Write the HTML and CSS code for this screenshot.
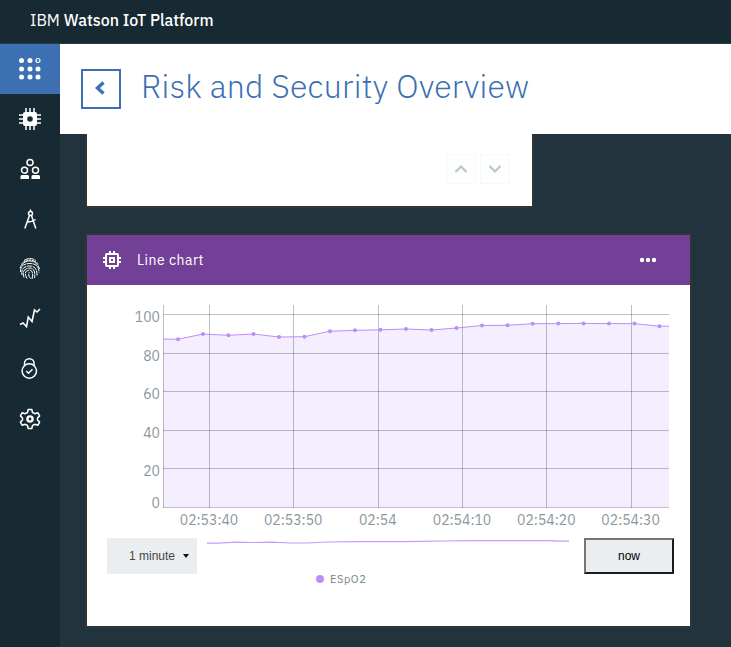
FILE: index.html
```html
<!DOCTYPE html>
<html lang="en">
<head>
<meta charset="utf-8">
<title>IBM Watson IoT Platform</title>
<link rel="stylesheet" href="styles.css">
</head>
<body>
<header class="topbar"><span class="brand-ibm">IBM</span><span class="brand">Watson IoT Platform</span></header>
<div class="shell">
  <nav class="sidebar">
    <a class="nav-item active"><svg width="24" height="24" viewBox="0 0 24 24" fill="#fff"><circle cx="3.5" cy="3.5" r="2.5"/><circle cx="12" cy="3.5" r="2.5"/><circle cx="20" cy="3.5" r="2" fill="none" stroke="#fff" stroke-width="1.2"/><circle cx="3.5" cy="12" r="2.5"/><circle cx="12" cy="12" r="2.5"/><circle cx="20" cy="12" r="2.5"/><circle cx="3.5" cy="20" r="2.5"/><circle cx="12" cy="20" r="2.5"/><circle cx="20" cy="20" r="2.5"/></svg></a>
    <a class="nav-item"><svg width="24" height="24" viewBox="0 0 24 24"><path d="M8 1v22M12 1v22M16 1v22M1 8h22M1 12h22M1 16h22" stroke="#fff" stroke-width="1.500"/><rect x="5" y="5" width="14" height="14" rx="2" fill="#fff"/><circle cx="12" cy="12" r="2.800" fill="#172932"/></svg></a>
    <a class="nav-item"><svg width="24" height="24" viewBox="0 0 24 24" fill="none" stroke="#fff" stroke-width="1.500"><circle cx="12" cy="5.500" r="3"/><circle cx="6.500" cy="13.200" r="3"/><circle cx="17.500" cy="13.200" r="3"/><path d="M2.500 22v-3l1-1h6.500l1 1v3zM13.500 22v-3l1-1H21l1 1v3z" fill="#fff" stroke="none"/></svg></a>
    <a class="nav-item"><svg width="24" height="24" viewBox="0 0 24 24" fill="none" stroke="#fff" stroke-width="1.500"><path d="M12.500 2.500v2M11.500 8.500l-4.700 13M13.500 8.500l4.300 13M8.500 15q5 .5 9-2.500"/><circle cx="12.500" cy="6.500" r="2"/></svg></a>
    <a class="nav-item"><svg width="24" height="24" viewBox="0 0 24 24" fill="none" stroke="#fff" stroke-width="1"><g stroke-dasharray="5 .7"><path d="M6 3.500q6-4 12 0M3.500 7q8-8 17 0M2 11Q5 4 12 4t9.500 8M2.500 15Q2 6.500 12 6.500q9 0 9 9M4 18q-1.500-9 8-9 7.500 0 7 10M6 20.500q-3-9 6-9.500 6 .5 4.500 10M9 21.500q-4.500-8 3-8.500 4 1 2 9M12.500 21.500q-3-3-1-6.500"/></g></svg></a>
    <a class="nav-item"><svg width="24" height="24" viewBox="0 0 24 24" fill="none" stroke="#fff" stroke-width="1.600"><path d="M2 17.500l3-1.500 3.500 3.500 1.800-9.500 3.700 4.500L16.500 3l2.500 2 3-3"/></svg></a>
    <a class="nav-item"><svg width="24" height="24" viewBox="0 0 24 24" fill="none" stroke="#fff" stroke-width="1.500"><circle cx="11.300" cy="14" r="7.200"/><path d="M6.500 8.500V6.500a4.800 4.800 0 0 1 9.600 0v2M8.200 14l2.300 2.300 4-4"/></svg></a>
    <a class="nav-item"><svg width="24" height="24" viewBox="0 0 24 24" fill="none" stroke="#fff" stroke-width="1.500" stroke-linejoin="round"><path d="M10.200 2.500h3.600l.7 3 2.300 1.200 3-1 1.800 3.200L19.500 11v2l2.100 2.100-1.800 3.200-3-1-2.300 1.200-.7 3h-3.600l-.7-3-2.300-1.200-3 1-1.800-3.200L4.500 13v-2L2.400 8.900l1.800-3.200 3 1 2.300-1.200z"/><circle cx="12" cy="12" r="2.600" stroke-width="2.400"/></svg></a>
  </nav>
  <div class="page">
    <div class="titlebar">
      <a class="back"><svg width="14" height="16" viewBox="0 0 14 16"><path d="M9.500 1.500L3.500 7l6 5.500" fill="none" stroke="#3d70b2" stroke-width="3.400"/></svg></a>
      <h1>Risk and Security Overview</h1>
    </div>
    <main>
      <section class="card pager">
        <span class="step"><svg width="14" height="10" viewBox="0 0 14 10"><path d="M1.500 8L7 2.500 12.500 8"/></svg></span>
        <span class="step"><svg width="14" height="10" viewBox="0 0 14 10"><path d="M1.500 2L7 7.500 12.500 2"/></svg></span>
      </section>
      <section class="card chart-card">
        <div class="card-head">
          <svg width="18" height="18" viewBox="0 0 18 18" fill="none" stroke="#fff" stroke-width="2"><rect x="3" y="3" width="12" height="12" rx="1"/><path d="M7 0v3M11 0v3M7 15v3M11 15v3M0 7h3M0 11h3M15 7h3M15 11h3"/><rect x="7" y="7" width="4" height="4"/></svg>
          <h2>Line chart</h2>
          <svg class="more" width="18" height="6" viewBox="0 0 18 6" fill="#fff"><circle cx="3" cy="3" r="2.200"/><circle cx="9" cy="3" r="2.200"/><circle cx="15" cy="3" r="2.200"/></svg>
        </div>
        <svg class="plot" width="603" height="250" viewBox="87 285 603 250">
          <path d="M163 339L178 339.300 203 334 228.500 335.300 253.500 334 279 337 304.500 336.700 330 331.200 355 330.300 380.500 329.800 406 329 431.500 330 456.500 328 482 325.500 507.500 325.300 532.700 323.700 558.300 323.600 583.500 323.400 609 323.600 634.500 323.600 659.500 326.200 669 326.200V507H163z" fill="#f4eefe"/>
          <path class="grid" d="M163.500 305V508M209.500 305V508M293.500 305V508M378.500 305V508M462.500 305V508M546.500 305V508M631.500 305V508M163 314.500H669M163 353.500H669M163 391.500H669M163 430.500H669M163 468.500H669M163 507.500H669"/>
          <path class="line" d="M163 339L178 339.300 203 334 228.500 335.300 253.500 334 279 337 304.500 336.700 330 331.200 355 330.300 380.500 329.800 406 329 431.500 330 456.500 328 482 325.500 507.500 325.300 532.700 323.700 558.300 323.600 583.500 323.400 609 323.600 634.500 323.600 659.500 326.200 669 326.200"/>
          <path class="dots" d="M178 339.300h0M203 334h0M228.500 335.300h0M253.500 334h0M279 337h0M304.500 336.700h0M330 331.200h0M355 330.300h0M380.500 329.800h0M406 329h0M431.500 330h0M456.500 328h0M482 325.500h0M507.500 325.300h0M532.700 323.700h0M558.300 323.600h0M583.500 323.400h0M609 323.600h0M634.500 323.600h0M659.500 326.200h0"/>
          <g class="ylab"><text x="160" y="322">100</text><text x="160" y="361">80</text><text x="160" y="399">60</text><text x="160" y="438">40</text><text x="160" y="476">20</text><text x="160" y="508">0</text></g>
          <g class="xlab"><text x="209" y="525" textLength="58.500">02:53:40</text><text x="293.200" y="525" textLength="58.500">02:53:50</text><text x="377.800" y="525" textLength="37.800">02:54</text><text x="462" y="525" textLength="58.500">02:54:10</text><text x="546.300" y="525" textLength="58.500">02:54:20</text><text x="630.600" y="525" textLength="58.500">02:54:30</text></g>
        </svg>
        <div class="controls">
          <span class="range">1 minute<i class="caret"></i></span>
          <div class="overview">
            <svg width="362" height="10" viewBox="207 538 362 10"><path class="mini" d="M207 543.200H218L236 542.200 254 542.500 272 542.200 290 543H308L326 542 362 541.600 400 541.600 420 541.300 440 541 475 540.700 530 540.700 549 540.700 560 541.200H569"/></svg>
            <div class="legend"><i></i><span>ESpO2</span></div>
          </div>
          <button class="now">now</button>
        </div>
      </section>
    </main>
  </div>
</div>
</body>
</html>
```
FILE: styles.css
```css
* { box-sizing: border-box; }
body { margin: 0; width: 731px; height: 647px; overflow: hidden; background: #21343d; font-family: "IBM Plex Sans", Roboto, sans-serif; }
svg { display: block; flex: none; }
.topbar { height: 44px; padding: 0 30px 4px; display: flex; align-items: center; gap: 4px; background: #172932; border-bottom: 1px solid #2d3d45; color: #fff; font-size: 16px; }
.brand { font-weight: 500; letter-spacing: -.03px; }
.brand-ibm { letter-spacing: 0; }
.shell { display: flex; height: 603px; }
.sidebar { width: 60px; flex: none; background: #172932; }
.nav-item { height: 50px; display: flex; align-items: center; justify-content: center; }
.active { background: #3d70b2; }
.page { flex: 1; }
.titlebar { height: 90px; padding-left: 21px; display: flex; align-items: center; background: #fff; color: #3d70b2; }
.back { width: 40px; height: 40px; border: 2px solid #3d70b2; display: flex; align-items: center; justify-content: center; }
h1 { margin: 0 0 7px 20px; font-size: 32px; font-weight: 300; letter-spacing: .26px; white-space: nowrap; }
main { padding-left: 27px; }
.card { background: #fff; box-shadow: 0 0 0 2px #2f3635; }
.pager { width: 445px; height: 72px; padding: 20px 22px; display: flex; justify-content: flex-end; gap: 4px; clip-path: inset(0 -2px -2px -2px); }
.step { width: 30px; height: 30px; border: 1px solid #f8f8f8; background: #fdfefe; display: flex; align-items: center; justify-content: center; }
.step path { fill: none; stroke: #c2c3c3; stroke-width: 2.2; }
.chart-card { width: 603px; height: 391px; margin-top: 29px; }
.card-head { height: 50px; padding: 0 33px 0 16px; display: flex; align-items: center; background: #734098; color: #fff; }
h2 { margin: 0 0 0 16px; font-size: 14px; font-weight: 400; letter-spacing: .5px; }
.more { margin-left: auto; }
.grid { fill: none; stroke: rgba(91, 96, 119, .4); stroke-width: 1; }
.line { fill: none; stroke: #ba8ff7; stroke-width: 1; }
.dots { fill: none; stroke: #ba8ff7; stroke-width: 4; stroke-linecap: round; }
.plot text { font-size: 14px; fill: #8c969b; }
.ylab { text-anchor: end; }
.xlab { text-anchor: middle; }
.controls { display: flex; padding: 3px 16px 0 20px; }
.range { width: 90px; height: 36px; padding: 0 8px 0 22px; display: flex; align-items: center; justify-content: space-between; background: #eaeef1; color: #464646; font: 12px "Liberation Sans", sans-serif; }
.caret { border: 3.5px solid transparent; border-top: 4px solid #111; border-bottom: 0; }
.overview { width: 362px; margin-left: 10px; }
.mini { fill: none; stroke: #c49cfa; stroke-width: 1.2; }
.legend { display: flex; align-items: center; gap: 6px; height: 14px; margin: 24px 0 0 109px; color: #777f86; font-size: 11px; letter-spacing: .55px; }
.legend i { width: 8px; height: 8px; border-radius: 50%; background: #ba8ff7; }
.now { width: 90px; height: 36px; margin-left: 15px; padding: 0; border: 2px solid; border-color: #767676 #1b1c1d #1b1c1d #767676; background: #eaeef1; color: #000; font: 12px "Liberation Sans", sans-serif; }
```
